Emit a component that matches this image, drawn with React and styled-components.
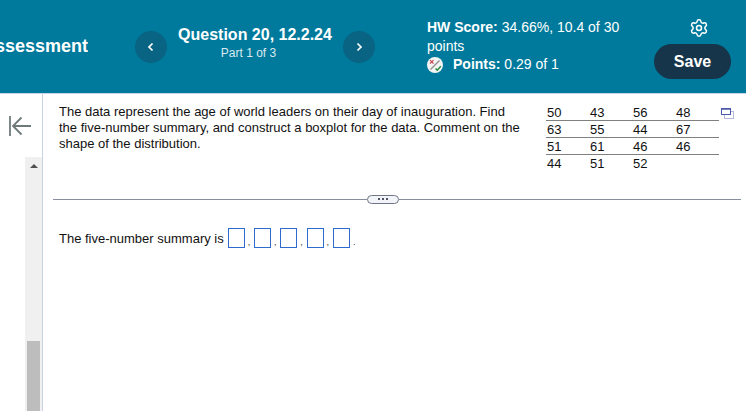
import React from "react"
import styled, { createGlobalStyle } from "styled-components"
import { Settings } from "lucide-react"

const GlobalStyle = createGlobalStyle`
  html, body {
    margin: 0;
    height: 100%;
    overflow: hidden;
    background: #fff;
    font-family: "Liberation Sans", Arial, sans-serif;
    color: #111;
  }
`

const Page = styled.div`
  width: 746px;
  height: 411px;
  display: flex;
  flex-direction: column;
  overflow: hidden;
`

const Header = styled.header`
  height: 93px;
  flex: none;
  display: flex;
  align-items: center;
  background: #007a9c;
  border-bottom: 1px solid #c8d3e6;
  color: #fff;
`

const Brand = styled.div`
  width: 88px;
  margin-right: 47px;
  display: flex;
  justify-content: flex-end;
  overflow: hidden;
  white-space: nowrap;
  font-size: 18px;
  font-weight: 700;
`

const NavButton = styled.div`
  width: 32px;
  height: 32px;
  flex: none;
  display: flex;
  align-items: center;
  justify-content: center;
  border-radius: 50%;
  background: #086482;
`

const QuestionBlock = styled.div`
  width: 176px;
  margin-top: -8px;
  text-align: center;
`

const QuestionTitle = styled.div`
  font-size: 16px;
  font-weight: 700;
  line-height: 22px;
`

const QuestionPart = styled.div`
  margin-right: 13px;
  font-size: 12px;
  line-height: 15px;
  color: #dbe9ef;
`

const ScoreBlock = styled.div`
  width: 205px;
  margin-left: 52px;
  margin-top: -1px;
  font-size: 14px;
  line-height: 18.5px;
`

const PointsLine = styled.div`
  display: flex;
  align-items: center;
  gap: 10px;
`

const Actions = styled.div`
  margin-left: auto;
  margin-right: 15px;
  margin-top: 3px;
  display: flex;
  flex-direction: column;
  align-items: center;
  gap: 6px;
`

const GearIcon = styled(Settings)`
  display: block;
  margin-left: 12px;
`

const SaveButton = styled.div`
  width: 77px;
  height: 35px;
  box-sizing: border-box;
  padding-top: 1px;
  display: flex;
  align-items: center;
  justify-content: center;
  border-radius: 18px;
  background: #16354a;
  font-size: 16px;
  font-weight: 700;
`

const Body = styled.div`
  flex: 1;
  min-height: 0;
  display: flex;
`

const Sidebar = styled.aside`
  width: 42px;
  flex: none;
  display: flex;
  flex-direction: column;
  border-right: 1px solid #c8d3e6;
`

const CollapseIcon = styled.svg`
  display: block;
  margin: 22px 0 21px 9px;
`

const ScrollTrack = styled.div`
  flex: 1;
  width: 17px;
  margin-left: auto;
  display: flex;
  flex-direction: column;
  align-items: center;
  background: #f0f0f0;
`

const ScrollArrow = styled.div`
  margin-top: 7px;
  width: 0;
  height: 0;
  border-left: 4px solid transparent;
  border-right: 4px solid transparent;
  border-bottom: 4px solid #505050;
`

const ScrollThumb = styled.div`
  width: 13px;
  height: 70px;
  margin-top: auto;
  background: #bdbdbd;
`

const Main = styled.main`
  flex: 1;
  min-width: 0;
  display: flex;
  flex-direction: column;
`

const TopRow = styled.div`
  height: 100px;
  flex: none;
  display: flex;
  padding: 10px 0 0 16px;
  box-sizing: border-box;
`

const Prompt = styled.p`
  width: 465px;
  margin: 0 22px 0 0;
  font-size: 13px;
  line-height: 16px;
`

const DataTable = styled.div`
  width: 173px;
  flex: none;
  font-size: 13px;
`

const DataRow = styled.div`
  height: 17px;
  box-sizing: border-box;
  display: grid;
  grid-template-columns: repeat(4, 43px);
  align-items: center;
  padding-left: 1px;
  border-bottom: ${({ $last }) => ($last ? "none" : "1px solid #808080")};
`

const CopyIcon = styled.svg`
  display: block;
  flex: none;
  margin: 4px 0 0 2px;
`

const DividerRow = styled.div`
  display: flex;
  align-items: center;
  height: 10px;
  margin: 0 5px 0 10px;
`

const DividerLine = styled.div`
  flex: ${({ $width }) => ($width ? `0 0 ${$width}px` : "1")};
  height: 1px;
  background: #878e9e;
`

const DividerHandle = styled.div`
  width: 32px;
  height: 9px;
  box-sizing: border-box;
  display: flex;
  align-items: center;
  justify-content: center;
  gap: 2px;
  border: 1px solid #6f7787;
  border-radius: 5px;
  background: #f2f4f7;
`

const HandleDot = styled.span`
  width: 2px;
  height: 2px;
  background: #4d5666;
`

const AnswerRow = styled.div`
  display: flex;
  align-items: center;
  margin: 24px 0 0 16px;
  font-size: 13px;
`

const AnswerBox = styled.span`
  width: 17px;
  height: 20px;
  box-sizing: border-box;
  margin-left: ${({ $first }) => ($first ? "4px" : "0")};
  border: 1px solid #2f6bcc;
`

const Separator = styled.span`
  width: 9.3px;
  padding-left: 3px;
  box-sizing: border-box;
  align-self: flex-end;
  font-size: 9px;
  line-height: 12px;
  color: #333;
`

const Chevron = ({ flip }) => (
  <svg width="8" height="10" viewBox="0 0 8 10">
    <path
      d={flip ? "M2.5 1.5 6 5 2.5 8.5" : "M5.5 1.5 2 5 5.5 8.5"}
      fill="none"
      stroke="#fff"
      strokeWidth="1.7"
    />
  </svg>
)

const PointsIcon = () => (
  <svg width="16" height="16" viewBox="0 0 16 16">
    <circle cx="8" cy="8" r="8" fill="#f4f4f4" />
    <path d="M3 3.2 6.5 6.7M6.5 3.2 3 6.7" stroke="#c8434f" strokeWidth="1.2" />
    <path d="M3.5 12.5 12.5 3.5" stroke="#8a8a8a" strokeWidth="1.2" />
    <path d="M8.5 11.5 10.3 13.3 13.8 9.3" fill="none" stroke="#1f8a3b" strokeWidth="1.4" />
  </svg>
)

const rows = [
  [50, 43, 56, 48],
  [63, 55, 44, 67],
  [51, 61, 46, 46],
  [44, 51, 52],
]

const App = () => (
  <Page>
    <GlobalStyle />
    <Header>
      <Brand>Assessment</Brand>
      <NavButton>
        <Chevron />
      </NavButton>
      <QuestionBlock>
        <QuestionTitle>Question 20, 12.2.24</QuestionTitle>
        <QuestionPart>Part 1 of 3</QuestionPart>
      </QuestionBlock>
      <NavButton>
        <Chevron flip />
      </NavButton>
      <ScoreBlock>
        <div>
          <b>HW Score:</b> 34.66%, 10.4 of 30 points
        </div>
        <PointsLine>
          <PointsIcon />
          <span>
            <b>Points:</b> 0.29 of 1
          </span>
        </PointsLine>
      </ScoreBlock>
      <Actions>
        <GearIcon size={20} strokeWidth={1.8} color="#fff" />
        <SaveButton>Save</SaveButton>
      </Actions>
    </Header>
    <Body>
      <Sidebar>
        <CollapseIcon width="23" height="20" viewBox="0 0 23 20">
          <path
            d="M1 0V20M22 10H4M12.5 1.5 4 10l8.5 8.5"
            fill="none"
            stroke="#6e7a7a"
            strokeWidth="1.8"
          />
        </CollapseIcon>
        <ScrollTrack>
          <ScrollArrow />
          <ScrollThumb />
        </ScrollTrack>
      </Sidebar>
      <Main>
        <TopRow>
          <Prompt>
            The data represent the age of world leaders on their day of inauguration. Find the
            five-number summary, and construct a boxplot for the data. Comment on the shape of
            the distribution.
          </Prompt>
          <DataTable>
            {rows.map((row, i) => (
              <DataRow key={i} $last={i === rows.length - 1}>
                {row.map((value, j) => (
                  <span key={j}>{value}</span>
                ))}
              </DataRow>
            ))}
          </DataTable>
          <CopyIcon width="13" height="11" viewBox="0 0 13 11">
            <rect x="3.5" y="3.5" width="9" height="7" fill="#fff" stroke="#b4b9dc" />
            <rect x="0.5" y="0.5" width="9" height="6" fill="#fff" stroke="#4a5aa8" />
            <path d="M0 1h10" stroke="#4a5aa8" strokeWidth="1.5" />
          </CopyIcon>
        </TopRow>
        <DividerRow>
          <DividerLine $width={314} />
          <DividerHandle>
            <HandleDot />
            <HandleDot />
            <HandleDot />
          </DividerHandle>
          <DividerLine />
        </DividerRow>
        <AnswerRow>
          The five-number summary is
          <AnswerBox $first />
          <Separator>,</Separator>
          <AnswerBox />
          <Separator>,</Separator>
          <AnswerBox />
          <Separator>,</Separator>
          <AnswerBox />
          <Separator>,</Separator>
          <AnswerBox />
          <Separator>.</Separator>
        </AnswerRow>
      </Main>
    </Body>
  </Page>
)

export default App
